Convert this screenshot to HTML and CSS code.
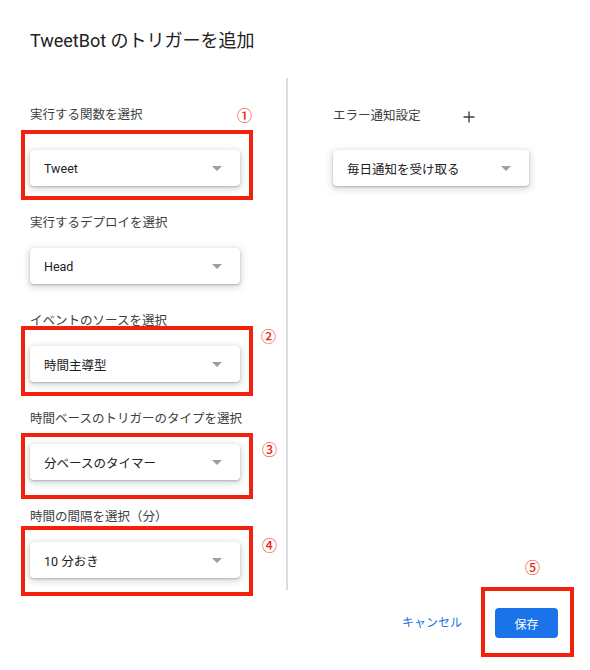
FILE: index.html
```html
<!DOCTYPE html>
<html lang="ja">
<head>
<meta charset="utf-8">
<title>TweetBot のトリガーを追加</title>
<link rel="stylesheet" href="styles.css">
</head>
<body>
<div class="dialog">
  <h1 class="title">TweetBot のトリガーを追加</h1>
  <div class="main">
    <div class="col-left">
      <div class="field field-first">
        <div class="label">実行する関数を選択</div>
        <div class="select"><span class="select-text">Tweet</span><span class="arrow"></span></div>
        <div class="annot-box box-fn"></div>
        <div class="num num-fn">①</div>
      </div>
      <div class="field">
        <div class="label">実行するデプロイを選択</div>
        <div class="select"><span class="select-text">Head</span><span class="arrow"></span></div>
      </div>
      <div class="field">
        <div class="label">イベントのソースを選択</div>
        <div class="select"><span class="select-text">時間主導型</span><span class="arrow"></span></div>
        <div class="annot-box box-src"></div>
        <div class="num num-src">②</div>
      </div>
      <div class="field">
        <div class="label">時間ベースのトリガーのタイプを選択</div>
        <div class="select"><span class="select-text">分ベースのタイマー</span><span class="arrow"></span></div>
        <div class="annot-box box-type"></div>
        <div class="num num-type">③</div>
      </div>
      <div class="field">
        <div class="label">時間の間隔を選択（分）</div>
        <div class="select"><span class="select-text">10 分おき</span><span class="arrow"></span></div>
        <div class="annot-box box-int"></div>
        <div class="num num-int">④</div>
      </div>
    </div>
    <div class="divider"></div>
    <div class="col-right">
      <div class="label-row">
        <div class="label">エラー通知設定</div>
        <svg class="plus" width="14" height="14" viewBox="0 0 14 14"><path d="M7 1.5v11M1.5 7h11" stroke="#3c4043" stroke-width="1.4" fill="none"/></svg>
      </div>
      <div class="select select-right"><span class="select-text">毎日通知を受け取る</span><span class="arrow"></span></div>
    </div>
  </div>
  <div class="footer">
    <span class="btn-cancel">キャンセル</span>
    <div class="save-wrap">
      <button class="btn-save">保存</button>
      <div class="annot-box box-save"></div>
      <div class="num num-save">⑤</div>
    </div>
  </div>
</div>
</body>
</html>
```
FILE: styles.css
```css
html, body {
  margin: 0;
  padding: 0;
  background: #ffffff;
}
body {
  font-family: "Roboto", "Noto Sans CJK JP", sans-serif;
  color: #202124;
}
.dialog {
  width: 590px;
  height: 670px;
  padding-top: 29px;
  box-sizing: border-box;
}
.title {
  margin: 0 0 25px 30px;
  font-size: 18px;
  font-weight: 400;
  line-height: 24px;
  color: #202124;
}
.main {
  display: flex;
  height: 512px;
}
.col-left {
  width: 286px;
  box-sizing: border-box;
  padding: 29px 0 0 30px;
}
.divider {
  width: 2px;
  background: #dadce0;
}
.col-right {
  padding: 29px 0 0 45px;
}
.field {
  position: relative;
}
.field + .field {
  margin-top: 29px;
}
.label {
  font-size: 12.5px;
  line-height: 16px;
  color: #3c4043;
  margin-bottom: 17px;
  white-space: nowrap;
}
.field-first .label {
  margin-bottom: 27px;
}
.select {
  width: 210px;
  height: 36px;
  box-sizing: border-box;
  padding: 0 18px 0 14px;
  display: flex;
  align-items: center;
  justify-content: space-between;
  background: #fff;
  border-radius: 4px;
  box-shadow: 0 1px 2px rgba(60, 64, 67, 0.3), 0 2px 6px 2px rgba(60, 64, 67, 0.17);
}
.select-text {
  font-size: 12.5px;
  color: #202124;
  white-space: nowrap;
}
.arrow {
  width: 0;
  height: 0;
  border-left: 5px solid transparent;
  border-right: 5px solid transparent;
  border-top: 5px solid #9e9e9e;
  margin-top: 1px;
}
.label-row {
  display: flex;
  align-items: center;
  margin-bottom: 26px;
}
.label-row .label {
  margin-bottom: 0;
}
.plus {
  margin-left: 41px;
  margin-top: 3px;
}
.select-right {
  width: 196px;
}
.footer {
  margin-top: 18px;
  display: flex;
  justify-content: flex-end;
  align-items: center;
  padding-right: 32px;
  gap: 33px;
}
.btn-cancel {
  font-size: 12px;
  color: #1a73e8;
  line-height: 30px;
}
.save-wrap {
  position: relative;
}
.btn-save {
  display: block;
  width: 63px;
  height: 30px;
  border: none;
  border-radius: 4px;
  background: #1a73e8;
  color: #fff;
  font-family: "Roboto", "Noto Sans CJK JP", sans-serif;
  font-size: 12px;
  padding: 0;
}
.annot-box {
  position: absolute;
  border: 4px solid #f2200c;
  box-sizing: border-box;
}
.num {
  position: absolute;
  font-family: "Noto Sans CJK JP", sans-serif;
  font-size: 15px;
  font-weight: 500;
  line-height: 16px;
  color: #f0280c;
}
.box-fn { left: -9px; top: 23px; width: 232px; height: 70px; }
.num-fn { left: 207px; top: 0; }
.box-src { left: -9px; top: 13px; width: 232px; height: 70px; }
.num-src { left: 231px; top: 15px; }
.box-type { left: -9px; top: 22px; width: 232px; height: 66px; }
.num-type { left: 232px; top: 30px; }
.box-int { left: -9px; top: 17px; width: 232px; height: 70px; }
.num-int { left: 232px; top: 28px; }
.box-save { left: -14px; top: -21px; width: 93px; height: 70px; }
.num-save { left: 30px; top: -49px; }
```
